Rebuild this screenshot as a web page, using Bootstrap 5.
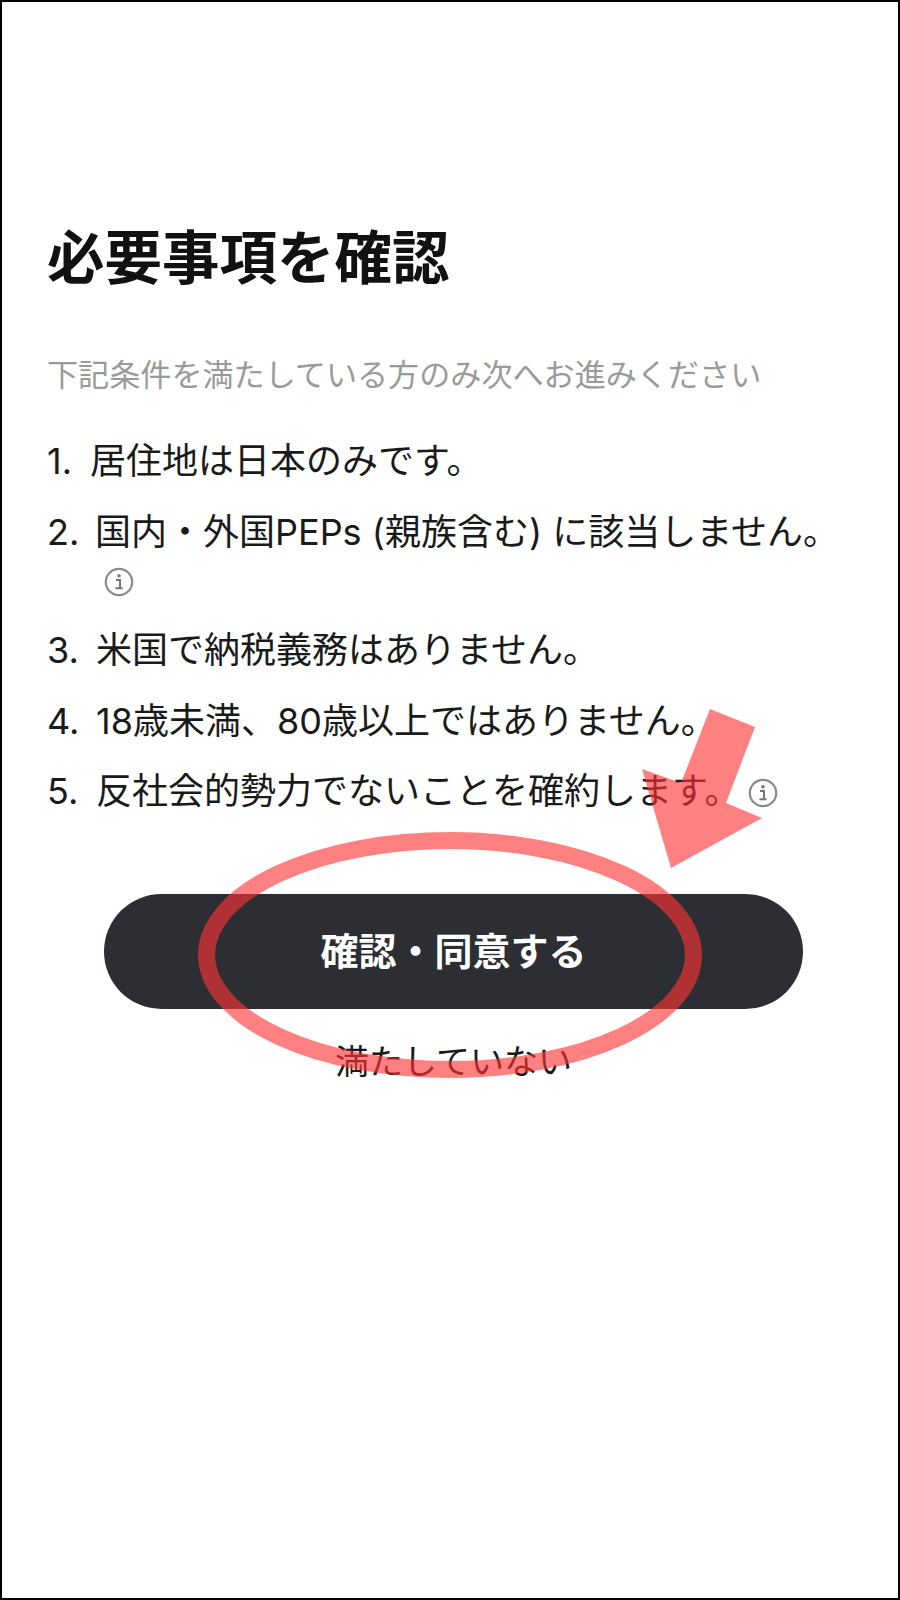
<!doctype html>
<html lang="ja">
<head>
<meta charset="utf-8">
<title>必要事項を確認</title>
<link href="https://cdn.jsdelivr.net/npm/bootstrap@5.3.0/dist/css/bootstrap.min.css" rel="stylesheet">
<style>
html,body{margin:0;background:#fff}
body{font-family:Inter,"Noto Sans CJK JP",sans-serif;color:#1a1a1a}
.frame{position:relative;width:900px;height:1600px;border:2px solid #000;padding:224px 45px 0;overflow:hidden}
.ttl{font-size:57.5px;font-weight:700;line-height:64px;margin:0 0 63px;color:#111}
.sub{font-size:31.1px;line-height:44px;color:#9a9a9a;margin:0 0 38px}
.steps{list-style:none;padding:0;margin:0;font-size:36px;line-height:52px}
.steps li{display:flex;margin-bottom:18.5px}
.num{flex:none;width:49px}
.num.n1{width:43px}
.num.n2{width:48px}
.inf{display:block;width:30px;height:30px;margin:9px 0 9px 9px}
.inf.inl{display:inline-block;margin:0 0 2px 8px}
.go{display:flex;justify-content:center;align-items:center;width:699px;height:115px;margin:77px 0 0 57px;background:#2c2e33;color:#fff;border:0;border-radius:58px;font-size:38px;font-weight:600}
.no{display:block;text-align:center;font-size:34px;line-height:44px;margin:31px 0 0 7px;color:#1a1a1a;text-decoration:none}
.marks{position:absolute;left:-2px;top:-2px;pointer-events:none}
</style>
</head>
<body>
<main class="frame">
  <h1 class="ttl">必要事項を確認</h1>
  <p class="sub">下記条件を満たしている方のみ次へお進みください</p>
  <ol class="steps">
    <li><span class="num n1">1.</span><span>居住地は日本のみです。</span></li>
    <li><span class="num n2">2.</span><span>国内・外国PEPs (親族含む) に該当しません。
      <svg class="inf" viewBox="0 0 30 30"><circle cx="15" cy="15" r="13.2" fill="none" stroke="#8a8a8a" stroke-width="2.2"/><circle cx="15" cy="8.8" r="1.8" fill="#777"/><path d="M12 13h4v8.2h2.5M11.5 21.2h4.5" fill="none" stroke="#777" stroke-width="2"/></svg></span></li>
    <li><span class="num">3.</span><span>米国で納税義務はありません。</span></li>
    <li><span class="num">4.</span><span>18歳未満、80歳以上ではありません。</span></li>
    <li><span class="num">5.</span><span>反社会的勢力でないことを確約します。<svg class="inf inl" viewBox="0 0 30 30"><circle cx="15" cy="15" r="13.2" fill="none" stroke="#8a8a8a" stroke-width="2.2"/><circle cx="15" cy="8.8" r="1.8" fill="#777"/><path d="M12 13h4v8.2h2.5M11.5 21.2h4.5" fill="none" stroke="#777" stroke-width="2"/></svg></span></li>
  </ol>
  <button class="go" type="button">確認・同意する</button>
  <a class="no" href="#">満たしていない</a>
  <svg class="marks" width="900" height="1600" viewBox="0 0 900 1600">
    <ellipse cx="450" cy="955" rx="243.5" ry="114.5" fill="none" stroke="#ff3434" stroke-opacity=".625" stroke-width="17"/>
    <polygon points="710,709 755,727 726,803 762,818 671,868 642,769 681,783" fill="#ff3434" fill-opacity=".625"/>
  </svg>
</main>
<script src="https://cdn.jsdelivr.net/npm/bootstrap@5.3.0/dist/js/bootstrap.bundle.min.js"></script>
</body>
</html>
